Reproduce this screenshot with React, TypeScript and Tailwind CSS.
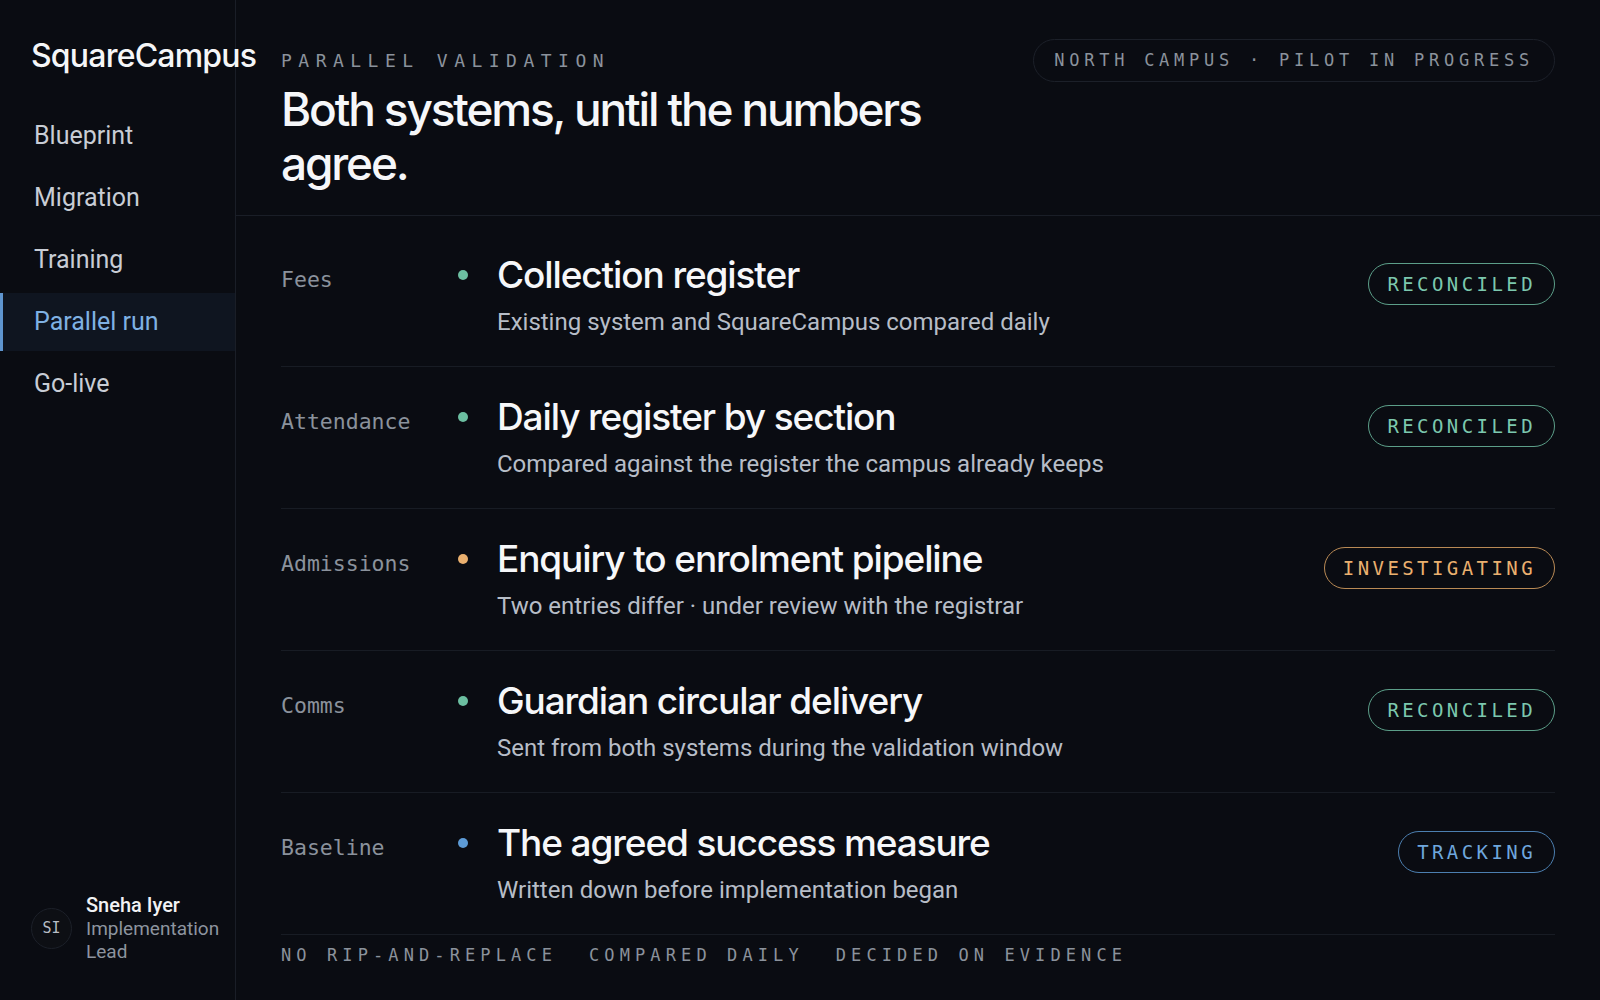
const nav = ["Blueprint", "Migration", "Training", "Parallel run", "Go-live"];

type Status = "reconciled" | "investigating" | "tracking";

const rows: { area: string; title: string; note: string; status: Status }[] = [
  {
    area: "Fees",
    title: "Collection register",
    note: "Existing system and SquareCampus compared daily",
    status: "reconciled",
  },
  {
    area: "Attendance",
    title: "Daily register by section",
    note: "Compared against the register the campus already keeps",
    status: "reconciled",
  },
  {
    area: "Admissions",
    title: "Enquiry to enrolment pipeline",
    note: "Two entries differ · under review with the registrar",
    status: "investigating",
  },
  {
    area: "Comms",
    title: "Guardian circular delivery",
    note: "Sent from both systems during the validation window",
    status: "reconciled",
  },
  {
    area: "Baseline",
    title: "The agreed success measure",
    note: "Written down before implementation began",
    status: "tracking",
  },
];

const dot: Record<Status, string> = {
  reconciled: "bg-[#6cbfa1]",
  investigating: "bg-[#eab06f]",
  tracking: "bg-[#5d9bd6]",
};

const badge: Record<Status, string> = {
  reconciled: "text-[#7cc8ae] border-[#5c9f89]",
  investigating: "text-[#eab06f] border-[#b98a55]",
  tracking: "text-[#6fa7dd] border-[#4c7fb0]",
};

const display = "font-['Inter',sans-serif]";
const body = "font-['Roboto','Noto_Sans',sans-serif]";
const mono = "font-['DejaVu_Sans_Mono','Liberation_Mono',monospace]";

export default function App() {
  return (
    <div className={`flex h-screen w-full bg-[#0a0c12] text-white ${body}`}>
      <aside className="relative z-10 flex w-[236px] shrink-0 flex-col border-r border-[#1a1e27] bg-[#0a0c12] pt-[37px] pb-[37px]">
        <div
          className={`pl-[31px] text-[32px] leading-[38px] font-medium tracking-[-0.025em] whitespace-nowrap text-[#f5f6f8] ${display}`}
        >
          SquareCampus
        </div>
        <nav className="mt-[32px] flex flex-col gap-[4px]">
          {nav.map((item) => {
            const active = item === "Parallel run";
            return (
              <div
                key={item}
                className={`flex h-[58px] items-center border-l-[3px] pl-[31px] text-[25px] ${
                  active
                    ? "border-[#5f95cf] bg-[#0f1520] text-[#7fb1e3]"
                    : "border-transparent text-[#c8cdd5]"
                }`}
              >
                {item}
              </div>
            );
          })}
        </nav>
        <div className="mt-auto flex items-center gap-[14px] pl-[31px]">
          <div
            className={`flex h-[41px] w-[41px] shrink-0 items-center justify-center rounded-full border border-[#1c2029] bg-[#0d0f14] text-[15px] text-[#b8bdc6] ${mono}`}
          >
            SI
          </div>
          <div className="flex flex-col">
            <span className="text-[20px] leading-[24px] font-medium text-[#f1f2f4]">Sneha Iyer</span>
            <span className="text-[19px] leading-[23px] text-[#8d949f]">Implementation</span>
            <span className="text-[19px] leading-[23px] text-[#8d949f]">Lead</span>
          </div>
        </div>
      </aside>

      <main className="flex min-w-0 flex-1 flex-col">
        <header className="flex items-start justify-between border-b border-[#1a1e27] px-[45px] pt-[39px] pb-[25px]">
          <div className="pt-[11px]">
            <div className={`text-[18px] leading-[22px] tracking-[0.36em] text-[#8b929c] ${mono}`}>
              PARALLEL VALIDATION
            </div>
            <h1
              className={`mt-[10px] max-w-[690px] text-[46px] leading-[54px] font-medium tracking-[-0.047em] text-[#f6f7f9] ${display}`}
            >
              Both systems, until the numbers agree.
            </h1>
          </div>
          <div
            className={`flex h-[43px] items-center rounded-full border border-[#1c2029] px-[20px] text-[17px] tracking-[0.28em] text-[#8b929c] ${mono}`}
          >
            NORTH CAMPUS · PILOT IN PROGRESS
          </div>
        </header>

        <section className="flex flex-col px-[45px] pt-[9px]">
          {rows.map((row) => (
            <div key={row.area} className="flex items-start border-b border-[#181c24] pt-[28px] pb-[28px]">
              <div className={`mt-[5px] w-[177px] shrink-0 text-[21.5px] leading-[44px] text-[#8b929c] ${mono}`}>
                {row.area}
              </div>
              <div className="flex h-[44px] w-[10px] shrink-0 items-center">
                <span className={`h-[10px] w-[10px] rounded-full ${dot[row.status]}`} />
              </div>
              <div className="ml-[29px] flex min-w-0 flex-1 flex-col">
                <div
                  className={`text-[37px] leading-[44px] font-medium tracking-[-0.03em] text-[#f6f7f9] ${display}`}
                >
                  {row.title}
                </div>
                <div className="mt-[9px] text-[24px] leading-[32px] text-[#b7bdc7]">{row.note}</div>
              </div>
              <div
                className={`mt-[10px] flex h-[42px] shrink-0 items-center rounded-full border px-[18px] text-[19px] tracking-[0.18em] ${badge[row.status]} ${mono}`}
              >
                {row.status.toUpperCase()}
              </div>
            </div>
          ))}
        </section>

        <footer className={`flex gap-[32px] px-[45px] pt-[9px] text-[17px] leading-[22px] tracking-[0.3em] text-[#8b929c] ${mono}`}>
          <span>NO RIP-AND-REPLACE</span>
          <span>COMPARED DAILY</span>
          <span>DECIDED ON EVIDENCE</span>
        </footer>
      </main>
    </div>
  );
}
